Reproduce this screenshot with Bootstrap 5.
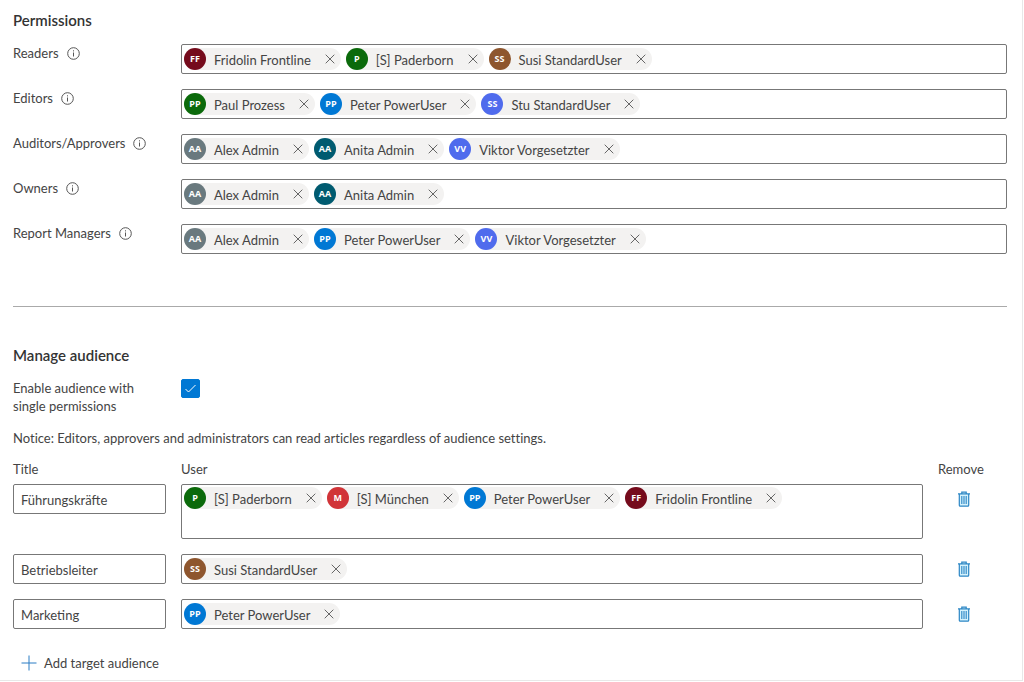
<!DOCTYPE html>
<html lang="en">
<head>
<meta charset="utf-8">
<meta name="viewport" content="width=device-width, initial-scale=1">
<title>Permissions</title>
<link href="https://cdn.jsdelivr.net/npm/bootstrap@5.3.0/dist/css/bootstrap.min.css" rel="stylesheet">
<style>
  body { font-family: Lato, "Open Sans", sans-serif; font-size: 13px; line-height: 18px; color: #444; background: #fff; font-variant-ligatures: none; }
  .panel { padding: 11px 15px 8px 13px; border-right: 1px solid #e8e8e8; border-bottom: 1px solid #e8e8e8; margin-right: 1px; }
  .section-title { font-size: 15px; line-height: 18px; font-weight: 600; color: #333; margin: 0; }
  .perm-list { gap: 15px; margin-top: 15px; }
  .label-col { width: 168px; flex: none; }
  .field-label { gap: 8px; height: 18px; }
  .info { width: 13px; height: 13px; color: #555; }
  .divider { border-top: 1px solid #aaa; opacity: 1; margin: 52px 0 39px; }

  /* people picker */
  .picker { min-height: 30px; border: 1px solid #777; border-radius: 2px; padding: 3px 2px; column-gap: 5px; min-width: 0; }
  .picker-tall { min-height: 55px; padding-top: 2px; align-content: flex-start; row-gap: 4px; }
  .picker input { flex: 1 1 180px; min-width: 0; height: 22px; border: 0; outline: 0; background: none; padding: 0; }
  .chip { height: 22px; border-radius: 11px; background: #f3f2f1; }
  .chip-name { padding-top: 2px; }
  .avatar { width: 22px; height: 22px; border-radius: 50%; color: #fff; font-family: "Open Sans", sans-serif; font-size: 9px; font-weight: 700; margin-right: 8px; }
  .chip-x { border: 0; background: none; padding: 0; width: 22px; height: 22px; margin-left: 8px; color: #666; }
  .chip-x svg { width: 10px; height: 10px; }
  .c-maroon { background: #750b1c; } .c-green { background: #0b6a0b; } .c-brown { background: #8e562e; }
  .c-blue { background: #0078d4; } .c-indigo { background: #4f6bed; } .c-gray { background: #69797e; }
  .c-teal { background: #005b70; } .c-red { background: #d13438; }

  .tick { width: 19px; height: 19px; border-radius: 2px !important; margin: 0; border-color: #0078d4; float: none; }
  .tick:checked { background-color: #0078d4; border-color: #0078d4; background-size: 15px;
    background-image: url("data:image/svg+xml,%3Csvg xmlns='http://www.w3.org/2000/svg' viewBox='0 0 15 15'%3E%3Cpath d='M2.5 8l3 3 7-7' fill='none' stroke='%23fff'/%3E%3C/svg%3E"); }
  .enable-row { margin-top: 15px; }
  .enable-label { width: 140px; }
  .notice { margin: 14px 0 13px; }

  .audience { width: 100%; table-layout: fixed; }
  .audience th { font-weight: 400; padding: 0 0 6px; }
  .audience td { padding: 0 15px 15px 0; vertical-align: top; }
  .audience .last-cell { padding-right: 0; }
  .col-name { width: 168px; } .col-remove { width: 69px; }
  .title-box { display: block; width: 100%; height: 30px; border: 1px solid #777; border-radius: 2px; padding: 2px 7px 0; color: #444; }
  .trash { border: 0; background: none; padding: 0; width: 14px; height: 30px; margin-left: 19px; }
  .add { border: 0; background: none; padding: 0; margin: 10px 0 0 8px; gap: 7px; color: #444; line-height: 18px; }
</style>
</head>
<body>
<svg class="d-none" aria-hidden="true">
  <symbol id="i-info" viewBox="0 0 13 13"><circle cx="6.5" cy="6.5" r="5.8" fill="none" stroke="currentColor"/><path d="M6.5 5.5v4M6.5 3.3v1.1" stroke="currentColor"/></symbol>
  <symbol id="i-x" viewBox="0 0 10 10"><path d="M.7.7l8.6 8.6M9.3.7L.7 9.3" stroke="currentColor" fill="none"/></symbol>
  <symbol id="i-trash" viewBox="0 0 14 16"><path d="M2.5 3h9v12h-9z" fill="#d5f2fc"/><path d="M1 2.8h12M4.8 2.5V1.2h4.4v1.3M2.3 3v11.3q0 .9.9.9h7.6q.9 0 .9-.9V3" fill="none" stroke="#2b86c5" stroke-width="1.2"/><path d="M4.8 5v8M7 5v8M9.2 5v8" stroke="#2b86c5" stroke-width="1.1"/></symbol>
</svg>

<main class="panel">
  <section>
    <h2 class="section-title">Permissions</h2>
    <div class="perm-list d-flex flex-column">
      <div class="d-flex">
        <div class="label-col field-label d-flex align-items-center"><label for="readers">Readers</label><svg class="info"><use href="#i-info"/></svg></div>
        <div class="picker d-flex flex-wrap flex-grow-1">
          <span class="chip d-flex align-items-center"><span class="avatar c-maroon d-flex align-items-center justify-content-center">FF</span><span class="chip-name">Fridolin Frontline</span><button class="chip-x d-flex align-items-center justify-content-center" aria-label="Remove"><svg><use href="#i-x"/></svg></button></span>
          <span class="chip d-flex align-items-center"><span class="avatar c-green d-flex align-items-center justify-content-center">P</span><span class="chip-name">[S] Paderborn</span><button class="chip-x d-flex align-items-center justify-content-center" aria-label="Remove"><svg><use href="#i-x"/></svg></button></span>
          <span class="chip d-flex align-items-center"><span class="avatar c-brown d-flex align-items-center justify-content-center">SS</span><span class="chip-name">Susi StandardUser</span><button class="chip-x d-flex align-items-center justify-content-center" aria-label="Remove"><svg><use href="#i-x"/></svg></button></span>
          <input id="readers" type="text">
        </div>
      </div>
      <div class="d-flex">
        <div class="label-col field-label d-flex align-items-center"><label for="editors">Editors</label><svg class="info"><use href="#i-info"/></svg></div>
        <div class="picker d-flex flex-wrap flex-grow-1">
          <span class="chip d-flex align-items-center"><span class="avatar c-green d-flex align-items-center justify-content-center">PP</span><span class="chip-name">Paul Prozess</span><button class="chip-x d-flex align-items-center justify-content-center" aria-label="Remove"><svg><use href="#i-x"/></svg></button></span>
          <span class="chip d-flex align-items-center"><span class="avatar c-blue d-flex align-items-center justify-content-center">PP</span><span class="chip-name">Peter PowerUser</span><button class="chip-x d-flex align-items-center justify-content-center" aria-label="Remove"><svg><use href="#i-x"/></svg></button></span>
          <span class="chip d-flex align-items-center"><span class="avatar c-indigo d-flex align-items-center justify-content-center">SS</span><span class="chip-name">Stu StandardUser</span><button class="chip-x d-flex align-items-center justify-content-center" aria-label="Remove"><svg><use href="#i-x"/></svg></button></span>
          <input id="editors" type="text">
        </div>
      </div>
      <div class="d-flex">
        <div class="label-col field-label d-flex align-items-center"><label for="auditors">Auditors/Approvers</label><svg class="info"><use href="#i-info"/></svg></div>
        <div class="picker d-flex flex-wrap flex-grow-1">
          <span class="chip d-flex align-items-center"><span class="avatar c-gray d-flex align-items-center justify-content-center">AA</span><span class="chip-name">Alex Admin</span><button class="chip-x d-flex align-items-center justify-content-center" aria-label="Remove"><svg><use href="#i-x"/></svg></button></span>
          <span class="chip d-flex align-items-center"><span class="avatar c-teal d-flex align-items-center justify-content-center">AA</span><span class="chip-name">Anita Admin</span><button class="chip-x d-flex align-items-center justify-content-center" aria-label="Remove"><svg><use href="#i-x"/></svg></button></span>
          <span class="chip d-flex align-items-center"><span class="avatar c-indigo d-flex align-items-center justify-content-center">VV</span><span class="chip-name">Viktor Vorgesetzter</span><button class="chip-x d-flex align-items-center justify-content-center" aria-label="Remove"><svg><use href="#i-x"/></svg></button></span>
          <input id="auditors" type="text">
        </div>
      </div>
      <div class="d-flex">
        <div class="label-col field-label d-flex align-items-center"><label for="owners">Owners</label><svg class="info"><use href="#i-info"/></svg></div>
        <div class="picker d-flex flex-wrap flex-grow-1">
          <span class="chip d-flex align-items-center"><span class="avatar c-gray d-flex align-items-center justify-content-center">AA</span><span class="chip-name">Alex Admin</span><button class="chip-x d-flex align-items-center justify-content-center" aria-label="Remove"><svg><use href="#i-x"/></svg></button></span>
          <span class="chip d-flex align-items-center"><span class="avatar c-teal d-flex align-items-center justify-content-center">AA</span><span class="chip-name">Anita Admin</span><button class="chip-x d-flex align-items-center justify-content-center" aria-label="Remove"><svg><use href="#i-x"/></svg></button></span>
          <input id="owners" type="text">
        </div>
      </div>
      <div class="d-flex">
        <div class="label-col field-label d-flex align-items-center"><label for="managers">Report Managers</label><svg class="info"><use href="#i-info"/></svg></div>
        <div class="picker d-flex flex-wrap flex-grow-1">
          <span class="chip d-flex align-items-center"><span class="avatar c-gray d-flex align-items-center justify-content-center">AA</span><span class="chip-name">Alex Admin</span><button class="chip-x d-flex align-items-center justify-content-center" aria-label="Remove"><svg><use href="#i-x"/></svg></button></span>
          <span class="chip d-flex align-items-center"><span class="avatar c-blue d-flex align-items-center justify-content-center">PP</span><span class="chip-name">Peter PowerUser</span><button class="chip-x d-flex align-items-center justify-content-center" aria-label="Remove"><svg><use href="#i-x"/></svg></button></span>
          <span class="chip d-flex align-items-center"><span class="avatar c-indigo d-flex align-items-center justify-content-center">VV</span><span class="chip-name">Viktor Vorgesetzter</span><button class="chip-x d-flex align-items-center justify-content-center" aria-label="Remove"><svg><use href="#i-x"/></svg></button></span>
          <input id="managers" type="text">
        </div>
      </div>
    </div>
  </section>

  <hr class="divider">

  <section>
    <h2 class="section-title">Manage audience</h2>
    <div class="enable-row d-flex">
      <div class="label-col"><label for="enable" class="enable-label">Enable audience with single permissions</label></div>
      <input id="enable" type="checkbox" class="form-check-input tick" checked>
    </div>
    <p class="notice">Notice: Editors, approvers and administrators can read articles regardless of audience settings.</p>
    <table class="audience">
      <colgroup><col class="col-name"><col><col class="col-remove"></colgroup>
      <thead><tr><th scope="col">Title</th><th scope="col">User</th><th scope="col">Remove</th></tr></thead>
      <tbody>
        <tr>
          <td><input class="title-box" type="text" value="Führungskräfte" aria-label="Title"></td>
          <td><div class="picker picker-tall d-flex flex-wrap">
            <span class="chip d-flex align-items-center"><span class="avatar c-green d-flex align-items-center justify-content-center">P</span><span class="chip-name">[S] Paderborn</span><button class="chip-x d-flex align-items-center justify-content-center" aria-label="Remove"><svg><use href="#i-x"/></svg></button></span>
            <span class="chip d-flex align-items-center"><span class="avatar c-red d-flex align-items-center justify-content-center">M</span><span class="chip-name">[S] München</span><button class="chip-x d-flex align-items-center justify-content-center" aria-label="Remove"><svg><use href="#i-x"/></svg></button></span>
            <span class="chip d-flex align-items-center"><span class="avatar c-blue d-flex align-items-center justify-content-center">PP</span><span class="chip-name">Peter PowerUser</span><button class="chip-x d-flex align-items-center justify-content-center" aria-label="Remove"><svg><use href="#i-x"/></svg></button></span>
            <span class="chip d-flex align-items-center"><span class="avatar c-maroon d-flex align-items-center justify-content-center">FF</span><span class="chip-name">Fridolin Frontline</span><button class="chip-x d-flex align-items-center justify-content-center" aria-label="Remove"><svg><use href="#i-x"/></svg></button></span>
            <input type="text" aria-label="User">
          </div></td>
          <td class="last-cell"><button class="trash d-flex align-items-center" aria-label="Remove row"><svg width="14" height="16"><use href="#i-trash"/></svg></button></td>
        </tr>
        <tr>
          <td><input class="title-box" type="text" value="Betriebsleiter" aria-label="Title"></td>
          <td><div class="picker d-flex flex-wrap">
            <span class="chip d-flex align-items-center"><span class="avatar c-brown d-flex align-items-center justify-content-center">SS</span><span class="chip-name">Susi StandardUser</span><button class="chip-x d-flex align-items-center justify-content-center" aria-label="Remove"><svg><use href="#i-x"/></svg></button></span>
            <input type="text" aria-label="User">
          </div></td>
          <td class="last-cell"><button class="trash d-flex align-items-center" aria-label="Remove row"><svg width="14" height="16"><use href="#i-trash"/></svg></button></td>
        </tr>
        <tr>
          <td><input class="title-box" type="text" value="Marketing" aria-label="Title"></td>
          <td><div class="picker d-flex flex-wrap">
            <span class="chip d-flex align-items-center"><span class="avatar c-blue d-flex align-items-center justify-content-center">PP</span><span class="chip-name">Peter PowerUser</span><button class="chip-x d-flex align-items-center justify-content-center" aria-label="Remove"><svg><use href="#i-x"/></svg></button></span>
            <input type="text" aria-label="User">
          </div></td>
          <td class="last-cell"><button class="trash d-flex align-items-center" aria-label="Remove row"><svg width="14" height="16"><use href="#i-trash"/></svg></button></td>
        </tr>
      </tbody>
    </table>
    <button class="add d-flex align-items-center"><svg width="16" height="16" viewBox="0 0 16 16"><path d="M8 .5v15M.5 8h15" stroke="#2b7cc4"/></svg>Add target audience</button>
  </section>
</main>
<script src="https://cdn.jsdelivr.net/npm/bootstrap@5.3.0/dist/js/bootstrap.bundle.min.js"></script>
</body>
</html>
